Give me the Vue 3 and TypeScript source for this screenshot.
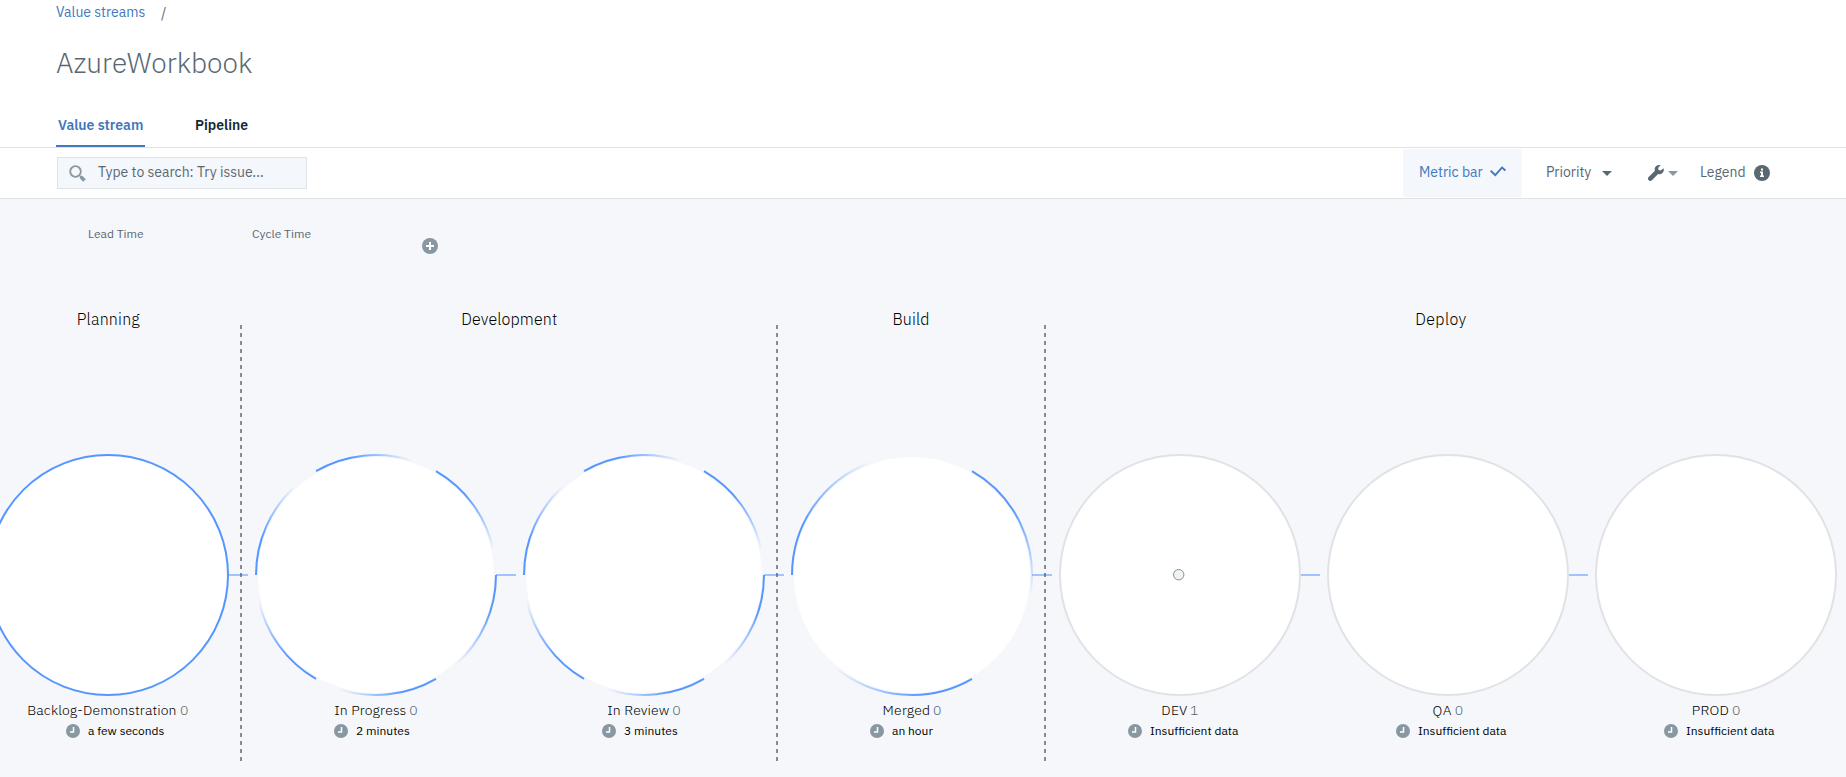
<script setup lang="ts">
interface Stage { x: number; name: string; start: number; width: number; count: number; countX: number; time: string; kind: string }

const stages: Stage[] = [
  { x: 108, name: 'Backlog-Demonstration', start: 27.3, width: 149.2, count: 0, countX: 180, time: 'a few seconds', kind: 'full' },
  { x: 376, name: 'In Progress', start: 334.3, width: 72, count: 0, countX: 409.3, time: '2 minutes', kind: 'six' },
  { x: 644, name: 'In Review', start: 607.3, width: 62, count: 0, countX: 672.3, time: '3 minutes', kind: 'six' },
  { x: 912, name: 'Merged', start: 882.6, width: 47.5, count: 0, countX: 933, time: 'an hour', kind: 'three' },
  { x: 1180, name: 'DEV', start: 1161.3, width: 26, count: 1, countX: 1190, time: 'Insufficient data', kind: 'idle' },
  { x: 1448, name: 'QA', start: 1432.6, width: 19, count: 0, countX: 1454.7, time: 'Insufficient data', kind: 'idle' },
  { x: 1716, name: 'PROD', start: 1691.8, width: 37, count: 0, countX: 1732, time: 'Insufficient data', kind: 'idle' },
]
const phases = [
  { name: 'Planning', x: 108.3, width: 63 },
  { name: 'Development', x: 509.3, width: 96 },
  { name: 'Build', x: 911, width: 37 },
  { name: 'Deploy', x: 1440.8, width: 51 },
]
const dividers = [241, 777, 1045]
const cy = 376

function point(cx: number, deg: number) {
  const a = (deg * Math.PI) / 180
  return { x: cx + 120 * Math.cos(a), y: cy + 120 * Math.sin(a) }
}
const arcs = stages.flatMap((s) => {
  if (s.kind !== 'six' && s.kind !== 'three') return []
  const step = s.kind === 'six' ? 60 : 120
  const sweep = s.kind === 'six' ? 48 : 70
  return Array.from({ length: 360 / step }, (_, i) => {
    const a = point(s.x, 180 + i * step)
    const b = point(s.x, 180 + i * step + sweep)
    return { id: `arc-${s.x}-${i}`, a, b, d: `M${a.x} ${a.y}A120 120 0 0 1 ${b.x} ${b.y}` }
  })
})
</script>

<template>
  <div class="page">
    <header class="header">
      <nav class="crumbs"><a class="crumb">Value streams</a><span class="slash">/</span></nav>
      <h1 class="title">AzureWorkbook</h1>
      <nav class="tabs">
        <a class="tab active">Value stream</a>
        <a class="tab second">Pipeline</a>
      </nav>
    </header>
    <div class="toolbar">
      <label class="search">
        <svg width="17" height="17" viewBox="0 0 17 17"><circle cx="6.500" cy="6.500" r="5.300" fill="none" stroke="#8897a2" stroke-width="1.800" /><path d="M11.200 11.200l1.700 1.700" stroke="#8897a2" stroke-width="2.400" /><path d="M12 12l3.500 3.500" stroke="#8897a2" stroke-width="3.600" /></svg>
        <span>Type to search: Try issue...</span>
      </label>
      <div class="tools">
        <div class="metric"><span>Metric bar</span>
          <svg class="check" width="16" height="11" viewBox="0 0 16 11"><path d="M.7 4.800l4.600 4.400L12 1.500l3.400 3.100" fill="none" stroke="#4178be" stroke-width="1.900" /></svg>
        </div>
        <div class="priority"><span>Priority</span><svg width="10" height="5" viewBox="0 0 10 5"><path d="M0 0h10L5 5z" fill="#5a6872" /></svg></div>
        <div class="wrench">
          <svg width="16" height="16" viewBox="0 0 16 16"><path d="M15.600 3.300l-3 2.100-2-.5-.5-2L12.600.3C10.600-.4 8.400.3 7.300 2.100 6.600 3.300 6.500 4.600 6.900 5.800L.7 12a2.200 2.200 0 0 0 3.200 3.200l6.200-6.200c1.300.4 2.800.2 4-.8 1.500-1.200 2-3.100 1.500-4.900z" fill="#5a6872" /></svg>
          <svg width="10" height="5" viewBox="0 0 10 5"><path d="M0 0h10L5 5z" fill="#8897a2" /></svg>
        </div>
        <div class="legend"><span>Legend</span>
          <svg width="16" height="16" viewBox="0 0 16 16"><circle cx="8" cy="8" r="8" fill="#5a6872" /><path d="M7 3.500h2v2H7zM6 6.500h3v4h1v1.500H6v-1.500h1V8H6z" fill="#fff" /></svg>
        </div>
      </div>
    </div>
    <main class="canvas">
      <svg class="diagram" width="1846" height="578" viewBox="0 0 1846 578">
        <defs>
          <linearGradient v-for="a in arcs" :id="a.id" :key="a.id" gradientUnits="userSpaceOnUse" :x1="a.a.x" :y1="a.a.y" :x2="a.b.x" :y2="a.b.y">
            <stop offset="0" stop-color="#5596ff" /><stop offset=".35" stop-color="#5596ff" /><stop offset="1" stop-color="#5596ff" stop-opacity="0" />
          </linearGradient>
        </defs>
        <g class="metric-label">
          <text x="88" y="39">Lead Time</text>
          <text x="252" y="39">Cycle Time</text>
        </g>
        <circle cx="430" cy="47" r="8" fill="#8897a2" />
        <path d="M430 43v8M426 47h8" stroke="#fff" stroke-width="2" />

        <text v-for="p in phases" :key="p.name" class="phase" :x="p.x - p.width / 2" y="126" :textLength="p.width">{{ p.name }}</text>
        <path v-for="s in stages.slice(0, 6)" :key="'c' + s.x" :d="`M${s.x + 120} ${cy}h20`" stroke="#a1c3ff" stroke-width="2" />
        <path v-for="x in dividers" :key="x" :d="`M${x} 126V562`" stroke="#5a6872" stroke-opacity=".75" stroke-width="2" stroke-dasharray="4 4" />
        <g v-for="s in stages" :key="s.x">
          <circle v-if="s.kind === 'full'" :cx="s.x" :cy="cy" r="120" fill="#fff" stroke="#5596ff" stroke-width="2" />
          <circle v-else-if="s.kind === 'idle'" :cx="s.x" :cy="cy" r="120" fill="#fff" stroke="#dfe3e6" stroke-width="2" />
          <circle v-else :cx="s.x" :cy="cy" r="118" fill="#fff" />
          <text class="name" :x="s.start" y="516" :textLength="s.width">{{ s.name }}</text>
          <text class="name count" :x="s.countX" y="516">{{ s.count }}</text>
          <g :transform="`translate(${s.x - (s.kind === 'idle' ? 45 : 35)} 532)`">
            <circle r="7" fill="#8897a2" /><path d="M.5-4V1H-3" fill="none" stroke="#fff" stroke-width="1.500" />
            <text class="time" x="15" y="4">{{ s.time }}</text>
          </g>
        </g>
        <path v-for="a in arcs" :key="a.id" :d="a.d" fill="none" :stroke="`url(#${a.id})`" stroke-width="2" />
        <circle cx="1178.700" cy="375.700" r="5.200" fill="#eff3f3" stroke="#84918e" />
      </svg>
    </main>
  </div>
</template>

<style>
body { margin: 0; overflow: hidden; }
</style>
<style scoped>
.page { width: 1846px; height: 777px; overflow: hidden; background: #fff; color: #5a6872; font: 400 14px/18px "IBM Plex Sans", Roboto, "Liberation Sans", sans-serif; display: flex; flex-direction: column; }
.header { height: 147px; flex: none; box-sizing: content-box; border-bottom: 1px solid #dfe3e6; display: flex; flex-direction: column; }
.crumbs { height: 26px; padding: 3px 0 0 56px; box-sizing: border-box; display: flex; }
.crumb { color: #4178be; width: 105px; }
.slash { padding-top: 1px; }
.title { margin: 17px 0 0 56px; font-size: 28px; line-height: 40px; font-weight: 300; }
.tabs { margin-top: auto; padding-left: 56px; display: flex; height: 31px; }
.tab { font-weight: 600; color: #152935; }
.active { width: 89px; box-sizing: border-box; border-bottom: 2px solid #4178be; padding-left: 2px; color: #4178be; }
.second { margin-left: 50px; }
.toolbar { height: 50px; flex: none; border-bottom: 1px solid #dfe3e6; display: flex; justify-content: space-between; align-items: center; }
.search { margin-left: 57px; width: 250px; height: 32px; box-sizing: border-box; border: 1px solid #dfe3e6; background: #f4f7fb; display: flex; align-items: center; padding-left: 11px; gap: 12px; }
.search span { padding-bottom: 2px; }
.tools { height: 48px; width: 443px; display: flex; align-items: center; }
.tools > div { display: flex; align-items: center; flex: none; }
.tools span { padding-bottom: 2px; }
.metric { box-sizing: border-box; width: 119px; height: 48px; padding-left: 16px; background: #f4f7fb; color: #4178be; justify-content: space-between; padding-right: 16px; }
.check { margin-bottom: 4px; }
.priority { width: 66px; margin-left: 24px; justify-content: space-between; }
.wrench { margin-left: 36px; gap: 4px; width: 52px; }
.legend { width: 70px; justify-content: space-between; }
.canvas { flex: 1; background: #f5f7fb; }
.diagram { display: block; }
.metric-label { font-size: 12px; fill: #5a6872; }
.phase { font-size: 16px; font-weight: 300; fill: #000; }
.name { font-size: 14px; font-weight: 300; fill: #000; }
.name.count { fill: #5a6872; }
.time { font-size: 12px; fill: #000; }
</style>
